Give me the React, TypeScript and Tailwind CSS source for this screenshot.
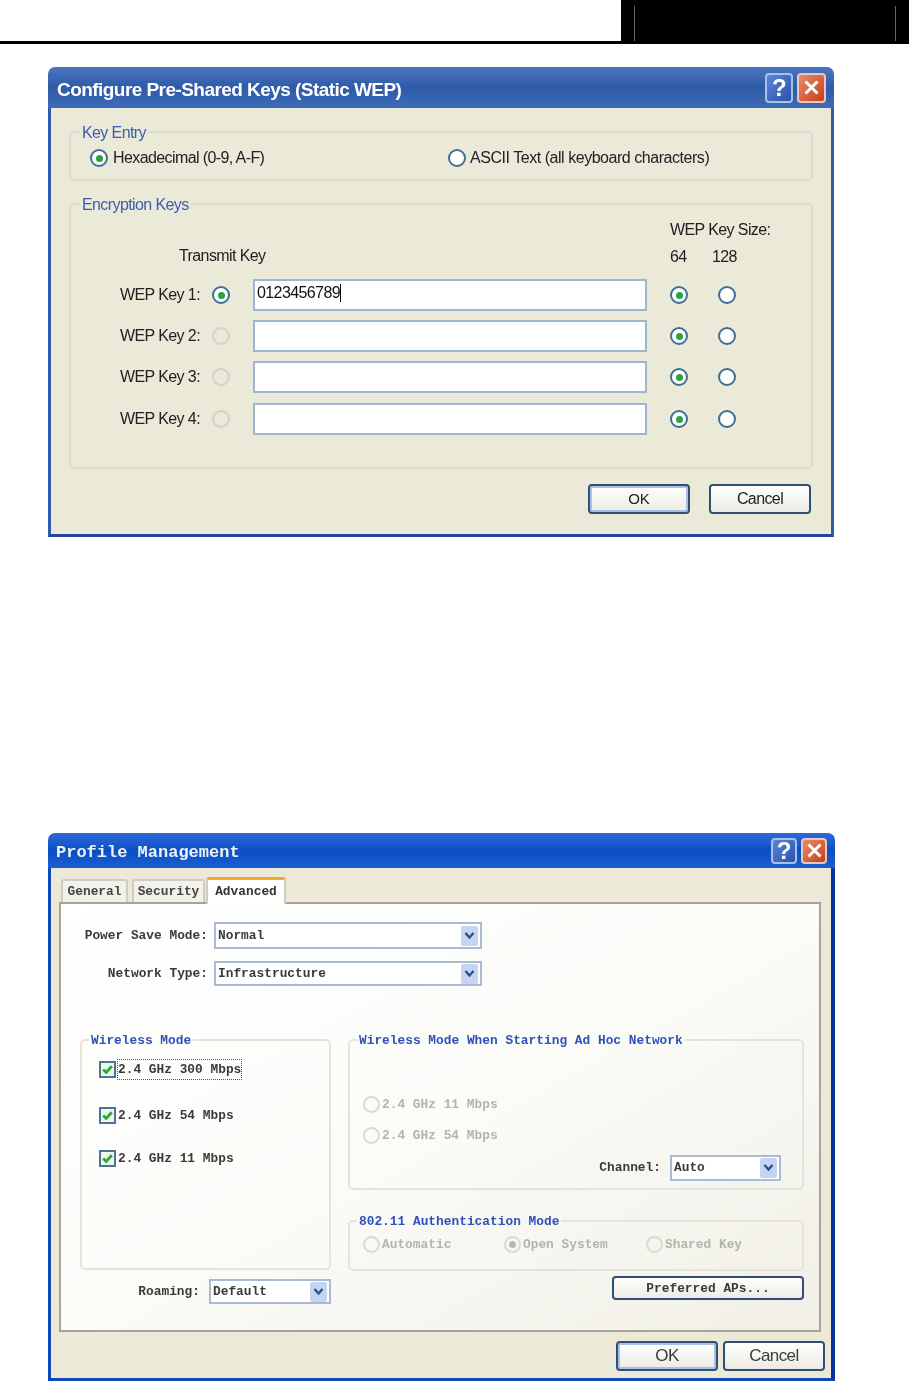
import React from "react";

const sans = "font-['Liberation_Sans',sans-serif]";
const mono = "font-['Liberation_Mono',monospace]";

function Radio({ on = false, off = false }: { on?: boolean; off?: boolean }) {
  return (
    <span
      className={`flex h-[18px] w-[18px] shrink-0 items-center justify-center rounded-full border-2 ${
        off ? "border-[#d4d2c6]" : "border-[#3f6f92] bg-white"
      }`}
    >
      {on && <span className="h-[7px] w-[7px] rounded-full bg-[#2aa33e]" />}
    </span>
  );
}

function TitleButtons({ size }: { size: "lg" | "sm" }) {
  const lg = size === "lg";
  return (
    <div className="flex gap-[4px]">
      <span className={`flex ${lg ? "h-[30px] w-[28px]" : "h-[26px] w-[26px]"} items-center justify-center rounded-[4px] border-2 border-[#a9c0e8] bg-gradient-to-br from-[#5b86d6] to-[#2c52ab] text-[24px] font-bold leading-none text-white ${sans}`}>
        ?
      </span>
      <span className={`flex ${lg ? "h-[30px] w-[29px]" : "h-[26px] w-[26px]"} items-center justify-center rounded-[4px] border-2 border-[#e8c8bc] bg-gradient-to-br from-[#e88a66] to-[#c83c14]`}>
        <svg width="15" height="15" viewBox="0 0 15 15" fill="none" stroke="white" strokeWidth="3">
          <path d="M1.5 1.5 L13.5 13.5 M13.5 1.5 L1.5 13.5" />
        </svg>
      </span>
    </div>
  );
}

function KeyRow({ n, value, active }: { n: number; value?: string; active?: boolean }) {
  return (
    <div className="flex h-[32px] items-center">
      <span className="ml-[49px] w-[82px] whitespace-nowrap">WEP Key {n}:</span>
      <span className="ml-[10px] flex"><Radio on={active} off={!active} /></span>
      <div className="ml-[23px] flex h-[32px] w-[394px] items-center border-2 border-[#9db5d1] bg-white pb-1 pl-[2px] text-[#111]">
        {value}
        {value && <span className="h-[18px] w-px bg-black" />}
      </div>
      <span className="ml-[23px]"><Radio on /></span>
      <span className="ml-[30px]"><Radio /></span>
    </div>
  );
}

function XpButton({ children, cls = "" }: { children: React.ReactNode; cls?: string }) {
  return (
    <div className={`flex items-center justify-center rounded-[4px] border-2 border-[#2f4f74] bg-gradient-to-b from-white to-[#ecebe3] ${cls}`}>
      {children}
    </div>
  );
}

function Select({ text, cls }: { text: string; cls: string }) {
  return (
    <div className={`flex items-center justify-between border-2 border-[#a9bbd2] bg-white pl-[2px] pr-[2px] ${cls}`}>
      <span>{text}</span>
      <span className="flex h-[20px] w-[17px] items-center justify-center rounded-[2px] bg-[#c5d4f2]">
        <svg width="11" height="9" viewBox="0 0 11 9" fill="none" stroke="#2f4d87" strokeWidth="2.4">
          <path d="M1.5 2 L5.5 6.5 L9.5 2" />
        </svg>
      </span>
    </div>
  );
}

function Check({ label, focus, cls = "" }: { label: string; focus?: boolean; cls?: string }) {
  return (
    <div className={`flex items-center ${cls}`}>
      <span className="flex h-[17px] w-[17px] shrink-0 items-center justify-center border-2 border-[#4f7396] bg-[#eef6e8]">
        <svg width="11" height="9" viewBox="0 0 11 9" fill="none" stroke="#27a83a" strokeWidth="2.8">
          <path d="M1.2 4.5 L4.2 7.4 L9.8 1.2" />
        </svg>
      </span>
      <span className={`ml-[2px] whitespace-nowrap ${focus ? "outline-1 outline-dotted outline-[#555]" : ""}`}>{label}</span>
    </div>
  );
}

function Group2({ title, cls, children }: { title: string; cls: string; children?: React.ReactNode }) {
  return (
    <fieldset className={`rounded-[5px] border-2 border-[#e6e4da] ${cls}`}>
      <legend className="ml-[7px] h-[20px] px-[2px] font-bold leading-[22px] text-[#3150b8]">{title}</legend>
      {children}
    </fieldset>
  );
}

function Dim({ label, on, cls = "" }: { label: string; on?: boolean; cls?: string }) {
  return (
    <div className={`flex items-center text-[#b4b4ac] ${cls}`}>
      <span className="flex h-[17px] w-[17px] items-center justify-center rounded-full border-2 border-[#dcdad0]">
        {on && <span className="h-[7px] w-[7px] rounded-full bg-[#b9b7ae]" />}
      </span>
      <span className="ml-[2px] whitespace-nowrap">{label}</span>
    </div>
  );
}

export default function App() {
  return (
    <div className="h-[1381px] w-[909px] overflow-hidden bg-white">
      <header className="flex h-[44px] justify-end border-b-[3px] border-black">
        <div className="flex h-[41px] w-[288px] justify-between bg-black px-[13px] pt-[6px]">
          <span className="w-px bg-[#666]" />
          <span className="w-px bg-[#666]" />
        </div>
      </header>

      {/* Static WEP dialog */}
      <section className={`ml-[48px] mt-[23px] h-[470px] w-[786px] text-[16px] tracking-[-0.6px] text-[#222] blur-[0.3px] ${sans}`}>
        <div className="flex h-[41px] items-center justify-between rounded-t-[7px] bg-gradient-to-b from-[#4a76c0] via-[#2f5aa8] to-[#3c6cb8] pl-[9px] pr-[8px]">
          <span className="pt-[5px] text-[19px] font-bold tracking-[-0.55px] text-white">Configure Pre-Shared Keys (Static WEP)</span>
          <TitleButtons size="lg" />
        </div>
        <div className="h-[429px] border-x-[3px] border-b-[3px] border-[#2f5cab] border-b-[#2a429c] bg-[#ebe9d8] px-[18px] pt-[14px]">
          <fieldset className="h-[59px] rounded-[5px] border-2 border-[#dcdacc]">
            <legend className="ml-[9px] h-[20px] px-[2px] leading-[22px] text-[#3a5db0]">Key Entry</legend>
            <div className="flex items-center pl-[19px] pt-[4px]">
              <Radio on />
              <span className="ml-[5px] w-[335px]">Hexadecimal (0-9, A-F)</span>
              <Radio />
              <span className="ml-[4px] tracking-[-0.46px]">ASCII Text (all keyboard characters)</span>
            </div>
          </fieldset>
          <fieldset className="mt-[13px] h-[275px] rounded-[5px] border-2 border-[#dcdacc]">
            <legend className="ml-[9px] h-[20px] px-[2px] leading-[22px] text-[#3a5db0]">Encryption Keys</legend>
            <div className="pl-[599px] pt-[6px] leading-[20px]">WEP Key Size:</div>
            <div className="flex pt-[6px] leading-[22px]">
              <span className="ml-[108px] w-[491px] -translate-y-px">Transmit Key</span>
              <span className="w-[42px]">64</span>
              <span>128</span>
            </div>
            <div className="mt-[11px] flex flex-col gap-[9px]">
              <KeyRow n={1} value="0123456789" active />
              <KeyRow n={2} />
              <KeyRow n={3} />
              <div className="mt-px"><KeyRow n={4} /></div>
            </div>
          </fieldset>
          <div className="mt-[15px] flex justify-end gap-[19px] pr-[2px]">
            <XpButton cls="h-[30px] w-[102px] text-[15px] tracking-[-0.2px] shadow-[inset_0_0_0_2px_#a8c0e8]">OK</XpButton>
            <XpButton cls="h-[30px] w-[102px]">Cancel</XpButton>
          </div>
        </div>
      </section>

      {/* Profile Management dialog */}
      <section className={`ml-[48px] mt-[296px] h-[548px] w-[787px] text-[12.85px] font-bold text-[#3a3a3a] blur-[0.4px] ${mono}`}>
        <div className="flex h-[35px] items-center justify-between rounded-t-[7px] bg-gradient-to-b from-[#2c6ad8] via-[#0a4fc4] to-[#1a5fd0] pl-[8px] pr-[8px]">
          <span className="pt-[4px] text-[17px] text-[#eef2f8]">Profile Management</span>
          <TitleButtons size="sm" />
        </div>
        <div className="flex h-[513px] flex-col border-y-0 border-b-[3px] border-l-[3px] border-r-[4px] border-[#0f49b8] border-r-[#07329c] bg-[#ece9d8] pl-[8px] pr-[10px] pt-[9px]">
          <div className="flex h-[25px] items-end pl-[2px] text-[#444]">
            <span className="flex h-[23px] w-[67px] items-center justify-center rounded-t-[3px] border-2 border-b-0 border-[#cfcdc2] bg-[#f2f1ea]">General</span>
            <span className="ml-[4px] flex h-[23px] w-[73px] items-center justify-center rounded-t-[3px] border-2 border-b-0 border-[#cfcdc2] bg-[#f2f1ea]">Security</span>
            <span className="relative z-10 -mb-[2px] ml-px flex h-[27px] w-[80px] items-start justify-center rounded-t-[3px] border-x-2 border-t-[3px] border-x-[#cfcdc2] border-t-[#f0a830] bg-white pt-[2px] text-[#333]">Advanced</span>
          </div>
          <div className="h-[430px] border-2 border-[#a6a498] bg-gradient-to-br from-white via-[#fbfbf8] to-[#f1efe6] pl-[19px] pt-[18px]">
            <div className="flex items-center">
              <span className="w-[128px] whitespace-nowrap text-right">Power Save Mode:</span>
              <Select text="Normal" cls="ml-[6px] h-[27px] w-[268px]" />
            </div>
            <div className="mt-[12px] flex items-center">
              <span className="w-[128px] whitespace-nowrap text-right">Network Type:</span>
              <Select text="Infrastructure" cls="ml-[6px] h-[25px] w-[268px]" />
            </div>
            <div className="mt-[44px] grid grid-cols-[251px_456px] gap-x-[17px]">
              <div className="flex flex-col">
                <Group2 title="Wireless Mode" cls="h-[240px]">
                  <div className="flex flex-col pl-[17px] pt-[10px]">
                    <Check label="2.4 GHz 300 Mbps" focus />
                    <Check label="2.4 GHz 54 Mbps" cls="mt-[27px]" />
                    <Check label="2.4 GHz 11 Mbps" cls="mt-[23px]" />
                  </div>
                </Group2>
                <div className="mt-[9px] flex items-center justify-end">
                  <span className="mr-[9px]">Roaming:</span>
                  <Select text="Default" cls="h-[25px] w-[122px]" />
                </div>
              </div>
              <div className="flex flex-col">
                <Group2 title="Wireless Mode When Starting Ad Hoc Network" cls="h-[160px]">
                  <div className="pl-[13px] pt-[45px]">
                    <Dim label="2.4 GHz 11 Mbps" />
                    <Dim label="2.4 GHz 54 Mbps" cls="mt-[12px]" />
                  </div>
                  <div className="mt-[9px] flex items-center justify-end pr-[21px]">
                    <span className="mr-[9px]">Channel:</span>
                    <Select text="Auto" cls="h-[26px] w-[111px]" />
                  </div>
                </Group2>
                <Group2 title="802.11 Authentication Mode" cls="mt-[21px] h-[60px]">
                  <div className="flex pl-[13px] pt-[4px]">
                    <Dim label="Automatic" cls="w-[141px]" />
                    <Dim label="Open System" on cls="w-[142px]" />
                    <Dim label="Shared Key" />
                  </div>
                </Group2>
                <XpButton cls="ml-[264px] mt-[5px] h-[24px] w-[192px] pt-px">Preferred APs...</XpButton>
              </div>
            </div>
          </div>
          <div className={`mt-[9px] flex justify-end gap-[5px] -mr-[4px] text-[17px] font-normal tracking-[-0.6px] ${sans}`}>
            <XpButton cls="h-[30px] w-[102px] shadow-[inset_0_0_0_2px_#a8c0e8]">OK</XpButton>
            <XpButton cls="h-[30px] w-[102px]">Cancel</XpButton>
          </div>
        </div>
      </section>
    </div>
  );
}
